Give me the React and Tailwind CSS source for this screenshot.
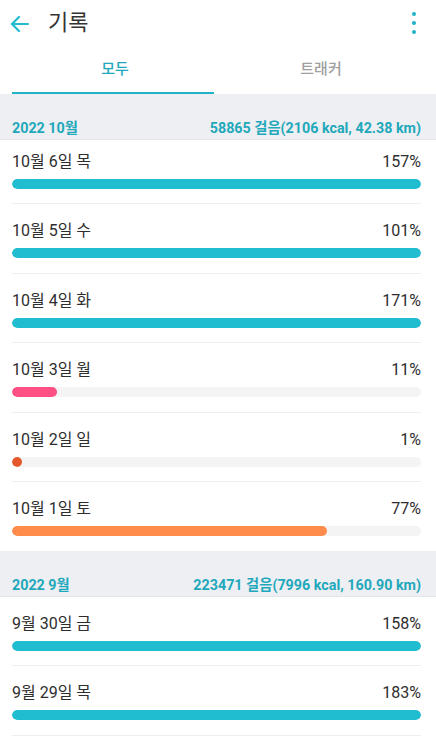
import React from "react";

const TEAL = "#20bccf";

function barColor(p) {
  if (p >= 100) return "bg-[#20bccf]";
  if (p >= 50) return "bg-[#ff8c4b]";
  if (p >= 5) return "bg-[#ff5086]";
  return "bg-[#e6582c]";
}

function Row({ label, pct, first, last }) {
  const w = Math.min(pct, 100);
  return (
    <div className="pl-3 pr-[15px] bg-white">
      <div
        className={`${first ? "pt-[11.5px]" : "pt-[17px]"} pb-[14.5px] ${
          last ? "" : "border-b border-[#efefef]"
        }`}
      >
        <div className="flex justify-between items-center text-[16px] leading-[20px] text-[#2e2e2e]">
          <span>{label}</span>
          <span>{pct}%</span>
        </div>
        <div className="mt-[7px] h-[10px] rounded-full bg-[#f4f4f5] overflow-hidden">
          <div
            className={`h-full rounded-full ${barColor(pct)} min-w-[10px]`}
            style={{ width: `${w}%` }}
          />
        </div>
      </div>
    </div>
  );
}

function SectionHeader({ left, right }) {
  return (
    <div className="h-[46px] bg-[#eeeff3] border-b border-[#e4e5e9] pl-3 pr-[15px] pt-[26px] flex justify-between text-[14.3px] leading-[17px] font-bold text-[#1fa8bb]">
      <span>{left}</span>
      <span>{right}</span>
    </div>
  );
}

export default function App() {
  const oct = [
    ["10월 6일 목", 157],
    ["10월 5일 수", 101],
    ["10월 4일 화", 171],
    ["10월 3일 월", 11],
    ["10월 2일 일", 1],
    ["10월 1일 토", 77],
  ];
  const sep = [
    ["9월 30일 금", 158],
    ["9월 29일 목", 183],
  ];
  return (
    <div
      className="w-[436px] h-[738px] overflow-hidden bg-white"
      style={{ fontFamily: "Roboto, 'Noto Sans CJK KR', sans-serif" }}
    >
      {/* App bar */}
      <div className="h-[46px] flex items-center pl-[8px] pr-[20px]">
        <svg width="24" height="24" viewBox="0 0 24 24" fill="none" stroke={TEAL} strokeWidth="2.2" strokeLinecap="round" strokeLinejoin="round" className="mt-[1px]">
          <path d="M20 12H4" />
          <path d="M11 5l-7 7 7 7" />
        </svg>
        <span className="ml-[16px] text-[22px] leading-[26px] text-[#333333]">기록</span>
        <div className="ml-auto flex flex-col gap-[5px] items-center">
          <span className="w-[4px] h-[4px] rounded-full bg-[#20b3c8]" />
          <span className="w-[4px] h-[4px] rounded-full bg-[#20b3c8]" />
          <span className="w-[4px] h-[4px] rounded-full bg-[#20b3c8]" />
        </div>
      </div>
      {/* Tabs */}
      <div className="h-[48px] flex pl-3 pr-[12px]">
        <div className="w-1/2 flex flex-col">
          <div className="flex-1 flex items-center justify-center text-[15px] font-medium text-[#1fa8bb]">모두</div>
          <div className="h-[2px] bg-[#20b3c8] mr-[4px]" />
        </div>
        <div className="w-1/2 flex items-center justify-center text-[15px] font-medium text-[#a0a0a0] pb-[2px]">트래커</div>
      </div>
      <SectionHeader left="2022 10월" right="58865 걸음(2106 kcal, 42.38 km)" />
      {oct.map(([l, p], i) => (
        <Row key={l} label={l} pct={p} first={i === 0} last={i === oct.length - 1} />
      ))}
      <SectionHeader left="2022 9월" right="223471 걸음(7996 kcal, 160.90 km)" />
      {sep.map(([l, p]) => (
        <Row key={l} label={l} pct={p} />
      ))}
    </div>
  );
}
